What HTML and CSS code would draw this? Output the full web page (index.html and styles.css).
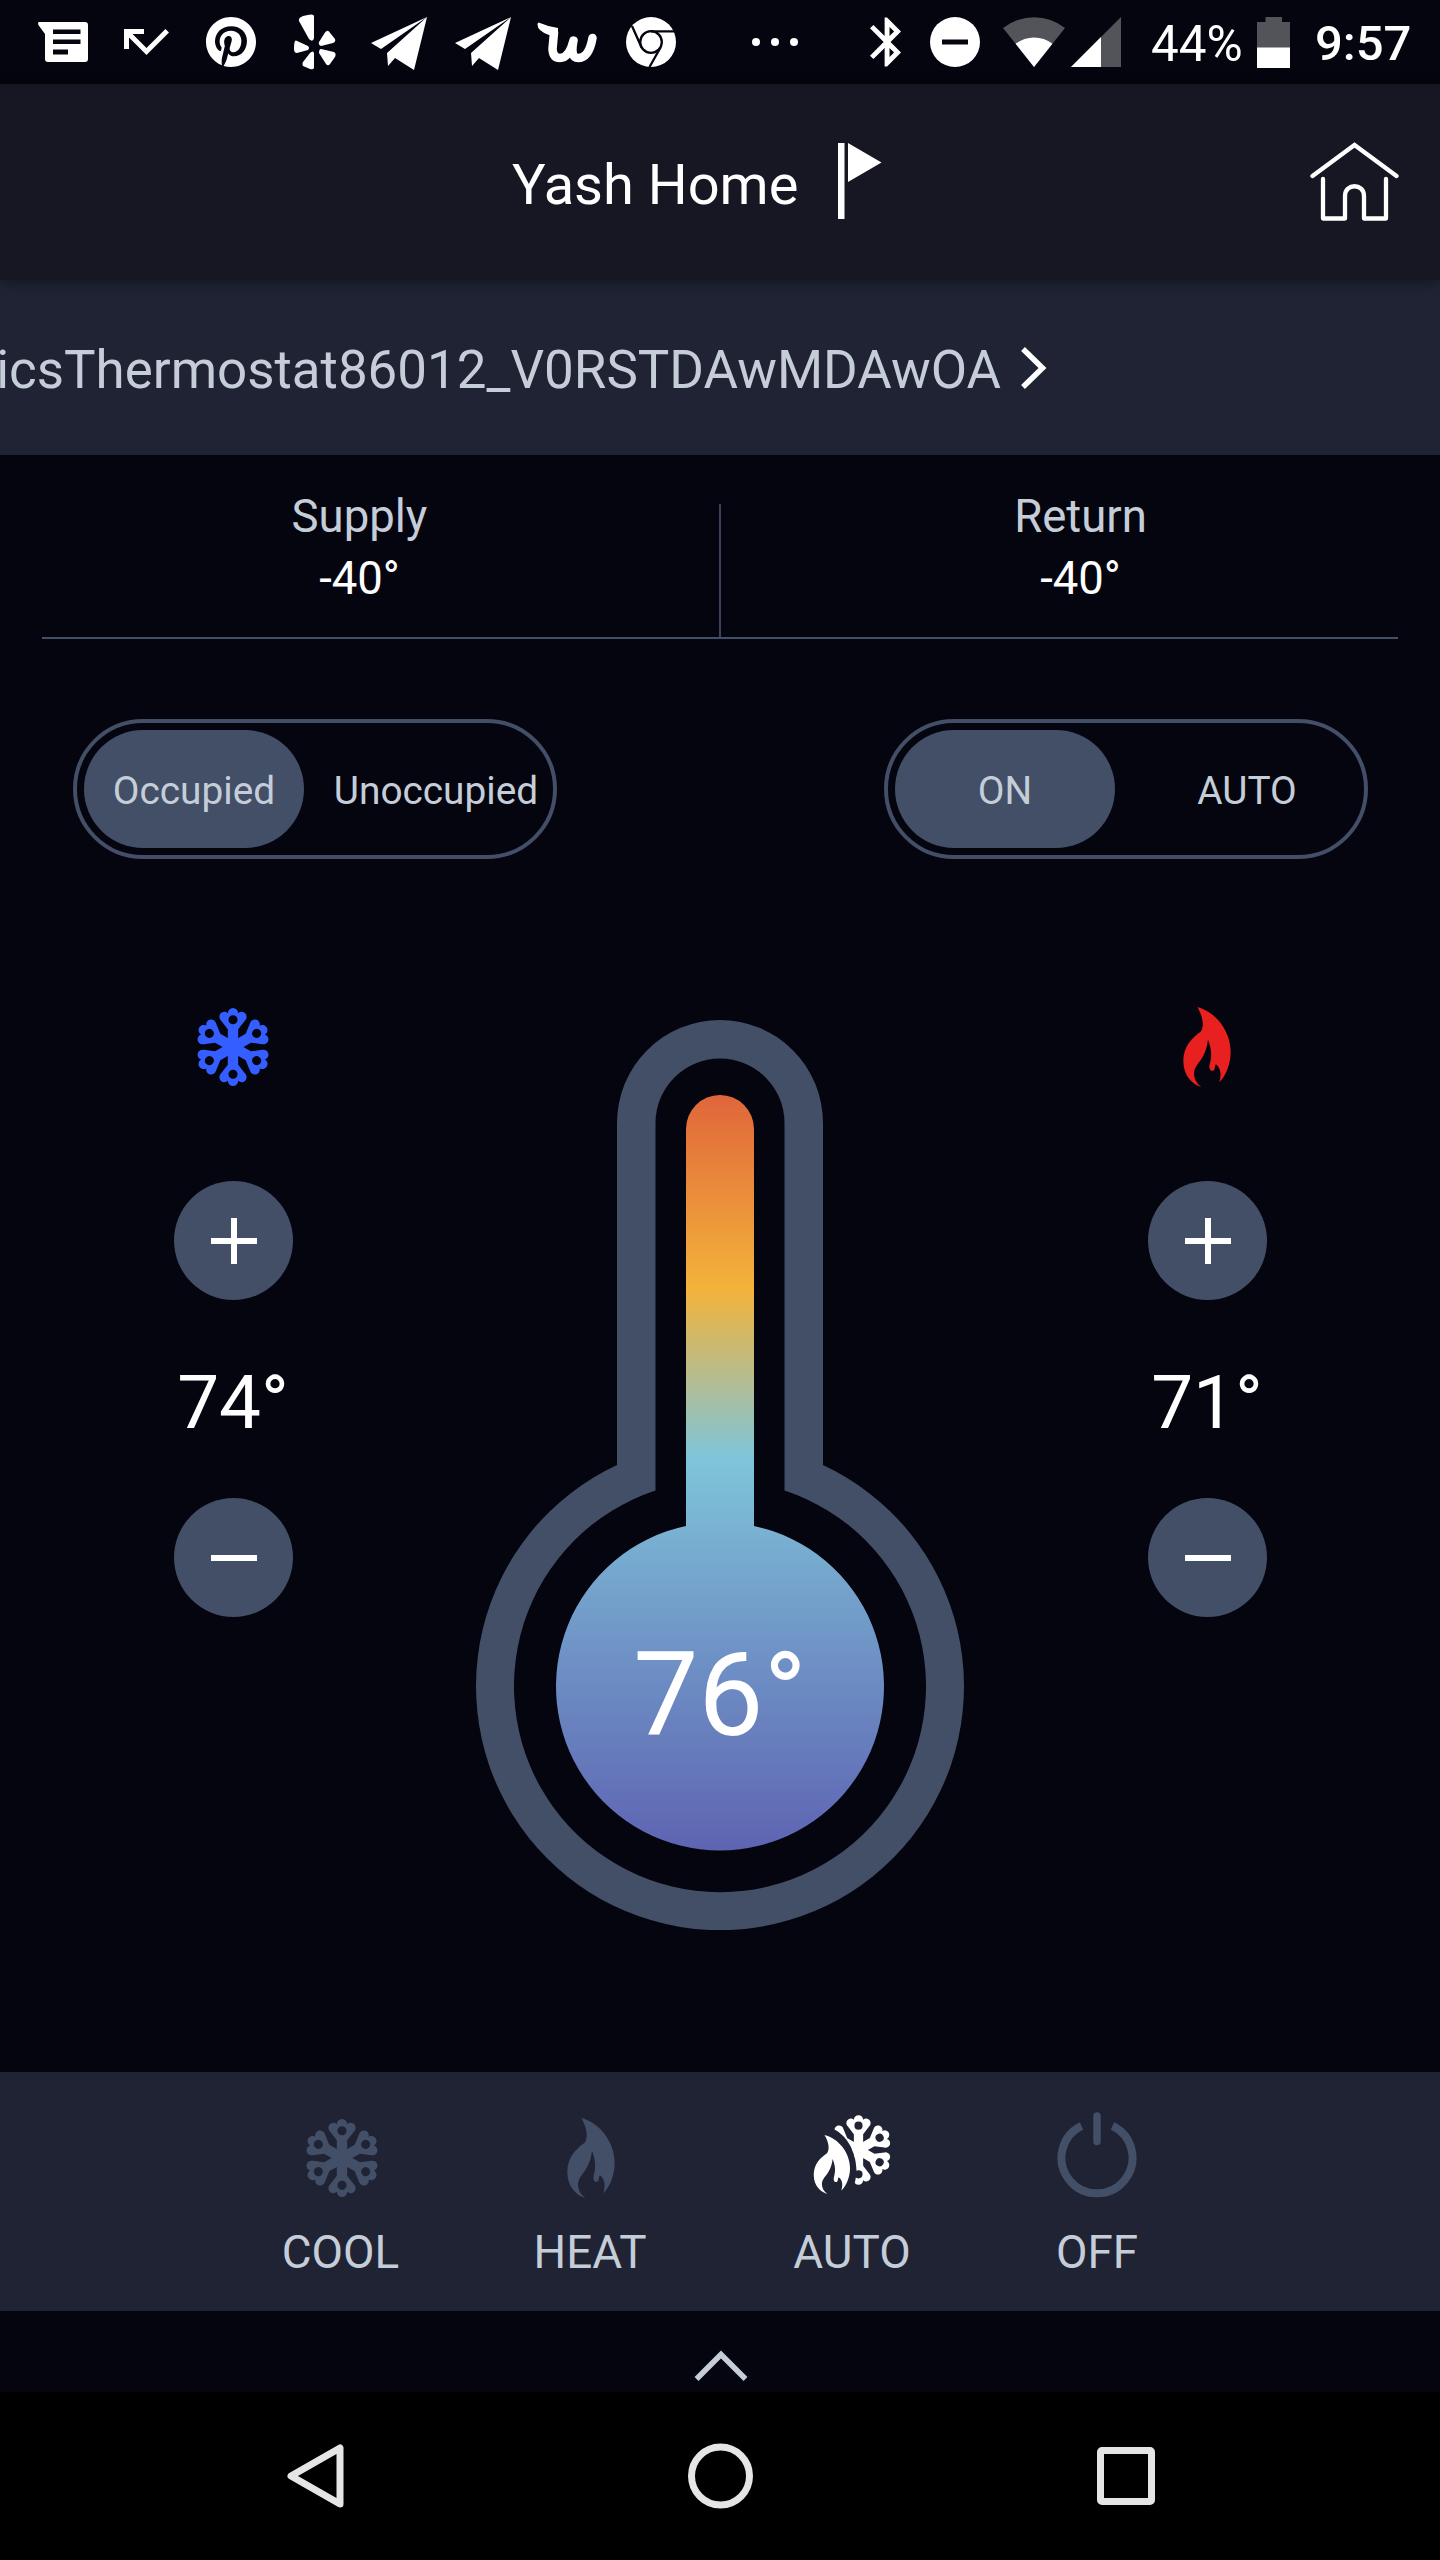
FILE: index.html
```html
<!DOCTYPE html>
<html lang="en">
<head>
<meta charset="utf-8">
<title>Yash Home</title>
<link rel="stylesheet" href="styles.css">
</head>
<body>
<svg class="defs" width="0" height="0">
  <defs>
    <path id="arm" fill-rule="evenodd" d="M-5 0V-17L-11.6 -25.6A4.6 4.6 0 0 1 -5 -32.6A4.9 4.9 0 1 1 5 -32.6A4.6 4.6 0 0 1 11.6 -25.6L5 -17V0ZM-4.4 -26.3a4.4 4.4 0 1 0 8.8 0a4.4 4.4 0 1 0 -8.8 0Z"/>
    <g id="flake">
      <use href="#arm"/><use href="#arm" transform="rotate(60)"/><use href="#arm" transform="rotate(120)"/>
      <use href="#arm" transform="rotate(180)"/><use href="#arm" transform="rotate(240)"/><use href="#arm" transform="rotate(300)"/>
    </g>
    <path id="flame" d="M140 78C156 105 162 136 150 152C125 170 98 195 98 240C98 285 125 310 152 318C138 308 130 294 130 277C132 246 164 240 172 176C183 205 184 225 177 250C172 272 190 274 192 263C193 256 194 252 196 250C212 264 212 282 206 304C225 285 240 250 240 213C240 150 195 92 140 78Z"/>
    <clipPath id="cut"><path d="M130 118C165 135 195 180 197 235C198 260 193 275 190 290V330H320V50H130Z"/></clipPath>
    <linearGradient id="mercury" gradientUnits="userSpaceOnUse" x1="0" y1="75" x2="0" y2="830">
      <stop offset="0" stop-color="#e0653b"/><stop offset=".256" stop-color="#f3b33a"/>
      <stop offset=".479" stop-color="#7fc5d9"/><stop offset=".735" stop-color="#6f93c6"/><stop offset="1" stop-color="#5e64b2"/>
    </linearGradient>
  </defs>
</svg>
<div class="screen">
  <header class="status">
    <svg class="messages" width="50" height="40" viewBox="0 0 50 40"><path fill="#fff" fill-rule="evenodd" d="M1 0H47a3 3 0 0 1 3 3V37a3 3 0 0 1 -3 3H10a3 3 0 0 1 -3 -3V12L.4 3Q-.4 0 1 0ZM15 7.500V12H42.500V7.500ZM15 17.500V22H42.500V17.500ZM15 27.500V32.500H30V27.500Z"/></svg>
    <svg class="missed" width="45" height="26" viewBox="3 7 18 10.410"><path fill="#fff" d="M19.590 7L12 14.590 6.410 9H11V7H3v8h2v-4.590l7 7 9-9z"/></svg>
    <svg class="pinterest" width="50" height="50" viewBox="0 8 496 496"><path fill="#fff" d="M496 256c0 137-111 248-248 248-25.600 0-50.200-3.900-73.400-11.100 10.100-16.500 25.200-43.500 30.800-65 3-11.600 15.400-59 15.400-59 8.100 15.400 31.700 28.500 56.800 28.500 74.800 0 128.700-68.800 128.700-154.300 0-81.900-66.900-143.200-152.900-143.200-107 0-163.900 71.800-163.900 150.100 0 36.400 19.400 81.700 50.300 96.100 4.700 2.200 7.200 1.200 8.300-3.300.8-3.400 5-20.300 6.900-28.100.6-2.500.3-4.700-1.700-7.100-10.100-12.500-18.300-35.300-18.300-56.600 0-54.700 41.400-107.600 112-107.600 60.900 0 103.600 41.500 103.600 100.900 0 67.100-33.900 113.600-78 113.600-24.300 0-42.600-20.100-36.700-44.800 7-29.500 20.500-61.300 20.500-82.600 0-19-10.200-34.900-31.400-34.900-24.900 0-44.900 25.700-44.900 60.200 0 22 7.400 36.800 7.400 36.800s-24.500 103.800-29 123.200c-5 21.400-3 51.600-.9 71.200C65.400 450.900 0 361.100 0 256 0 119 111 8 248 8s248 111 248 248z"/></svg>
    <svg class="yelp" width="44" height="56" viewBox="0 0 44 56"><path fill="#fff" d="M6 7Q5 4 10 2Q21 -1 21 2V24Q20 29 16 25ZM36 17.500L42 25Q43 28 40 29L28 32Q25 31 26 28L32 18.500Q34 15.500 36 17.500ZM3 26.500L15 32Q17 34 15 36L4 39Q1 39 1 35Q1 26 3 26.500ZM28 35L41 38Q43.500 39 42 43L37 50Q35 52.500 33 50L26 39Q26 35 28 35ZM21 39V54Q20 56 17 55L10 52Q9 50 10 48L17 39Q20 36 21 39Z"/></svg>
    <svg class="plane" width="56" height="53" viewBox="0 0 56 53"><path fill="#fff" d="M56 0L0 26L10 32ZM56 0L16 36L17 49L24 41L43 53Z"/></svg>
    <svg class="plane second" width="56" height="53" viewBox="0 0 56 53"><path fill="#fff" d="M56 0L0 26L10 32ZM56 0L16 36L17 49L24 41L43 53Z"/></svg>
    <svg class="wish" width="60" height="41" viewBox="0 0 60 41"><path fill="#fff" d="M.5 2Q1 -.5 3 1Q12 5 21 6V14L12 13Q0 9 .5 2Z"/><path fill="none" stroke="#fff" stroke-width="8.500" stroke-linecap="round" stroke-linejoin="round" d="M17 10.500L15.500 27Q16 36 23 36Q32 36 36.500 18.500Q33 36 41 36Q52 36 55.500 16"/></svg>
    <svg class="chrome" width="50" height="50" viewBox="0 0 50 50"><circle cx="25" cy="25" r="25" fill="#fff"/><g fill="none" stroke="#05050f" stroke-width="2.300"><circle cx="25" cy="25" r="10.800"/><path d="M25 14.300H48.500M6 9L15.600 30.500M34.500 30.500L23.500 50"/></g></svg>
    <svg class="dots" width="46" height="8" viewBox="0 0 46 8"><g fill="#fff"><circle cx="4" cy="4" r="4"/><circle cx="23" cy="4" r="4"/><circle cx="42" cy="4" r="4"/></g></svg>
    <svg class="bluetooth" width="31" height="50" viewBox="5 2 12.710 20"><path fill="#fff" d="M17.710 7.710L12 2h-1v7.590L6.410 5 5 6.410 10.590 12 5 17.590 6.410 19 11 14.410V22h1l5.710-5.710-4.300-4.290 4.300-4.290zM13 5.830l1.880 1.880L13 9.590V5.830zm1.880 10.460L13 18.170v-3.760l1.880 1.880z"/></svg>
    <svg class="dnd" width="50" height="50" viewBox="0 0 50 50"><circle cx="25" cy="25" r="25" fill="#fff"/><path fill="#05050f" d="M12 22.500H38V27.500H12Z"/></svg>
    <svg class="wifi" width="62" height="50" viewBox="0 0 62 50"><path fill="#535459" d="M31 50L0 11A50 50 0 0 1 62 11Z"/><path fill="#fff" d="M31 50L12.600 26.800A30 30 0 0 1 49.400 26.800Z"/></svg>
    <svg class="signal" width="50" height="50" viewBox="0 0 50 50"><path fill="#535459" d="M0 50L50 0V50Z"/><path fill="#fff" d="M0 50L30 20V50Z"/></svg>
    <span class="percent">44%</span>
    <svg class="battery" width="33" height="51" viewBox="0 0 33 51"><path fill="#535459" d="M8.500 0H25V5H33V51H0V5H8.500Z"/><path fill="#fff" d="M0 30.500H33V51H0Z"/></svg>
    <span class="clock">9:57</span>
  </header>

  <div class="titlebar">
    <h1>Yash Home</h1>
    <svg class="flag" width="46" height="76" viewBox="0 0 46 76"><path fill="#fff" d="M1 0H7.500V76H1ZM11 0L44.500 19.500L11 39Z"/></svg>
    <svg class="house" width="90" height="80" viewBox="0 0 90 80"><g fill="none" stroke="#fff" stroke-width="4.300" stroke-linecap="round" stroke-linejoin="round"><path d="M3.500 34L45.500 3L87.500 34" stroke-linejoin="miter"/><path d="M14 37V76.500H36V54C36 41 55 41 55 54V76.500H77V37"/></g></svg>
  </div>

  <div class="device">
    <span>icsThermostat86012_V0RSTDAwMDAwOA</span>
    <svg width="28" height="44" viewBox="0 0 28 44"><path fill="none" stroke="#fff" stroke-width="5.500" d="M3 3L22.500 22L3 41"/></svg>
  </div>

  <section class="readings">
    <div class="reading supply"><span>Supply</span><b>-40°</b></div>
    <i class="rule"></i>
    <div class="reading return"><span>Return</span><b>-40°</b></div>
  </section>

  <section class="toggles">
    <div class="toggle"><span class="on">Occupied</span><span>Unoccupied</span></div>
    <div class="toggle"><span class="on">ON</span><span>AUTO</span></div>
  </section>

  <main class="controls">
    <div class="setpoint">
      <svg class="symbol" width="80" height="82" viewBox="-38.500 -39.500 77 79"><use href="#flake" fill="#345eff"/></svg>
      <button class="round"><svg width="46" height="46" viewBox="0 0 46 46"><path fill="#fff" d="M0 20H20V0H26V20H46V26H26V46H20V26H0Z"/></svg></button>
      <span class="temp">74°</span>
      <button class="round"><svg width="46" height="46" viewBox="0 0 46 46"><path fill="#fff" d="M0 20H46V26H0Z"/></svg></button>
    </div>
    <div class="thermometer">
      <svg width="488" height="910" viewBox="0 0 488 910">
        <path fill="#434e67" fill-rule="evenodd" d="M141 445V103A103 103 0 0 1 347 103V445A244 244 0 1 1 141 445ZM179.500 470.500A206 206 0 1 0 308.500 470.500V103A64.500 64.500 0 0 0 179.500 103Z"/>
        <path fill="url(#mercury)" d="M210 506V109A34 34 0 0 1 278 109V506A164 164 0 1 1 210 506Z"/>
      </svg>
      <span class="current">76°</span>
    </div>
    <div class="setpoint">
      <svg class="symbol" width="48" height="82" viewBox="98 75 142 246"><use href="#flame" fill="#e8201f"/></svg>
      <button class="round"><svg width="46" height="46" viewBox="0 0 46 46"><path fill="#fff" d="M0 20H20V0H26V20H46V26H26V46H20V26H0Z"/></svg></button>
      <span class="temp">71°</span>
      <button class="round"><svg width="46" height="46" viewBox="0 0 46 46"><path fill="#fff" d="M0 20H46V26H0Z"/></svg></button>
    </div>
  </main>

  <nav class="modes">
    <div class="mode cooling"><svg width="80" height="86" viewBox="-38.500 -44.300 77 82.800"><use href="#flake" fill="#434e67"/></svg><span>COOL</span></div>
    <div class="mode heating"><svg width="48" height="86" viewBox="98 60 142 258"><use href="#flame" fill="#434e67"/></svg><span>HEAT</span></div>
    <div class="mode"><svg width="80" height="86" viewBox="64 66 240 258"><g fill="#fff"><g clip-path="url(#cut)"><use href="#flake" transform="translate(203.500 180) scale(2.780)"/></g><use href="#flame" transform="translate(-6 77.500) scale(.767 .7375)"/></g></svg><span>AUTO</span></div>
    <div class="mode"><svg width="82" height="86" viewBox="0 0 82 86"><g fill="none" stroke="#434e67" stroke-width="8"><path d="M25.500 13.800A35.500 35.500 0 1 0 56.500 13.800"/><path stroke-width="7.500" stroke-linecap="round" d="M41 4V29.500"/></g></svg><span>OFF</span></div>
  </nav>

  <div class="drawer"><svg width="54" height="32" viewBox="0 0 54 32"><path fill="none" stroke="#c5ced8" stroke-width="5.500" d="M2.500 29L27 4.500L51.500 29"/></svg></div>

  <footer class="system">
    <svg width="60" height="66" viewBox="0 0 60 66"><path fill="none" stroke="#e5e5e5" stroke-width="7" stroke-linejoin="round" d="M54 5V61L5 33Z"/></svg>
    <svg width="66" height="66" viewBox="0 0 66 66"><circle cx="32.500" cy="33" r="29" fill="none" stroke="#e5e5e5" stroke-width="7"/></svg>
    <svg width="60" height="60" viewBox="0 0 60 60"><rect x="4.500" y="4.500" width="51" height="51" rx="1.500" fill="none" stroke="#e5e5e5" stroke-width="7"/></svg>
  </footer>
</div>
</body>
</html>
```
FILE: styles.css
```css
* { box-sizing: border-box; }
body { margin: 0; background: #05050f; font-family: Roboto, sans-serif; color: #fff; }
svg { display: block; flex: none; }
.defs { position: absolute; }
.screen { width: 1440px; height: 2560px; display: flex; flex-direction: column; overflow: hidden; background: #05050f; }

.status { height: 84px; flex: none; display: flex; align-items: center; padding-left: 38px; font-size: 49px; line-height: 58px; white-space: nowrap; }
.missed { margin-left: 36px; }
.pinterest { margin-left: 37px; }
.yelp { margin-left: 37px; }
.plane { margin-left: 34px; margin-top: 3px; }
.plane.second { margin-left: 28px; }
.wish { margin-left: 26px; }
.chrome { margin-left: 29px; }
.dots { margin-left: 76px; }
.bluetooth { margin-left: 72px; }
.dnd { margin-left: 29px; }
.wifi { margin-left: 23px; }
.signal { margin-left: 6px; }
.percent { width: 105px; margin-left: 30px; padding-top: 4px; font-size: 49.4px; }
.battery { margin-left: 1px; }
.clock { margin-left: 25px; padding-top: 4px; font-weight: 500; }

.titlebar { height: 196px; flex: none; display: flex; align-items: flex-start; padding: 58px 41px 0 512px; background: #161722; box-shadow: 0 2px 12px rgba(0, 0, 0, .4); z-index: 1; }
.titlebar h1 { width: 325px; margin: 10px 0 0; font-size: 56px; font-weight: 400; line-height: 66px; white-space: nowrap; }
.flag { margin-top: 1px; }
.house { margin-left: auto; }

.device { height: 175px; flex: none; display: flex; align-items: center; background: #202334; color: #c5ced8; font-size: 52.9px; line-height: 62px; }
.device span { width: 1001px; display: flex; justify-content: flex-end; padding-top: 4px; }
.device svg { margin-left: 19px; margin-top: 1px; }

.readings { height: 184px; flex: none; margin: 0 42px; display: flex; border-bottom: 2px solid #434e67; }
.reading { flex: 1; display: flex; flex-direction: column; align-items: center; padding-top: 31px; font-size: 45.5px; line-height: 62px; color: #c5ced8; }
.supply { padding-right: 42px; }
.return { padding-left: 42px; }
.reading b { color: #fff; font-weight: 400; }
.rule { width: 2px; margin-top: 49px; background: #434e67; opacity: .85; }

.toggles { flex: none; margin: 80px 72px 0 73px; display: flex; justify-content: space-between; }
.toggle { width: 484px; height: 140px; display: flex; padding: 7px; border: 4px solid #434e67; border-radius: 70px; font-size: 38.8px; color: #c5ced8; }
.toggle span { display: flex; align-items: center; justify-content: center; width: 242px; padding: 2px 0 0 22px; }
.toggle .on { width: 220px; padding-left: 0; border-radius: 59px; background: #434e67; }

.controls { height: 1053px; flex: none; margin-top: 160px; padding: 0 172px 0 173px; display: flex; justify-content: space-between; }
.setpoint { width: 121px; display: flex; flex-direction: column; align-items: center; margin-top: -13px; }
.symbol { margin-right: 2px; }
.setpoint .round { margin: 93px 0 0; }
.round { width: 119px; height: 119px; padding: 0; display: flex; align-items: center; justify-content: center; border: 0; border-radius: 50%; background: #434e67; }
.temp { height: 103px; font-size: 74.6px; line-height: 88px; margin-top: 59px; margin-bottom: -57px; padding-right: 1px; white-space: nowrap; }
.thermometer { display: grid; justify-items: center; width: 488px; height: 910px; margin: 1px 1px 0 0; }
.thermometer > * { grid-area: 1 / 1; }
.current { margin-top: 606px; font-size: 116px; line-height: 138px; }

.modes { height: 239px; flex: none; display: grid; grid-template-columns: 249px 250px 272px 218px; padding: 40px 0 0 217px; background: #202334; }
.mode { display: flex; flex-direction: column; align-items: center; font-size: 45.8px; line-height: 54px; color: #c5ced8; }
.mode span { margin-top: 28px; }
.cooling span, .heating span { padding-right: 2px; }

.drawer { height: 81px; flex: none; display: flex; justify-content: center; align-items: flex-start; padding: 39px 0 0 2px; }
.system { flex: 1; display: flex; align-items: center; justify-content: space-between; padding: 0 284px 0 286px; background: #000; }
```
